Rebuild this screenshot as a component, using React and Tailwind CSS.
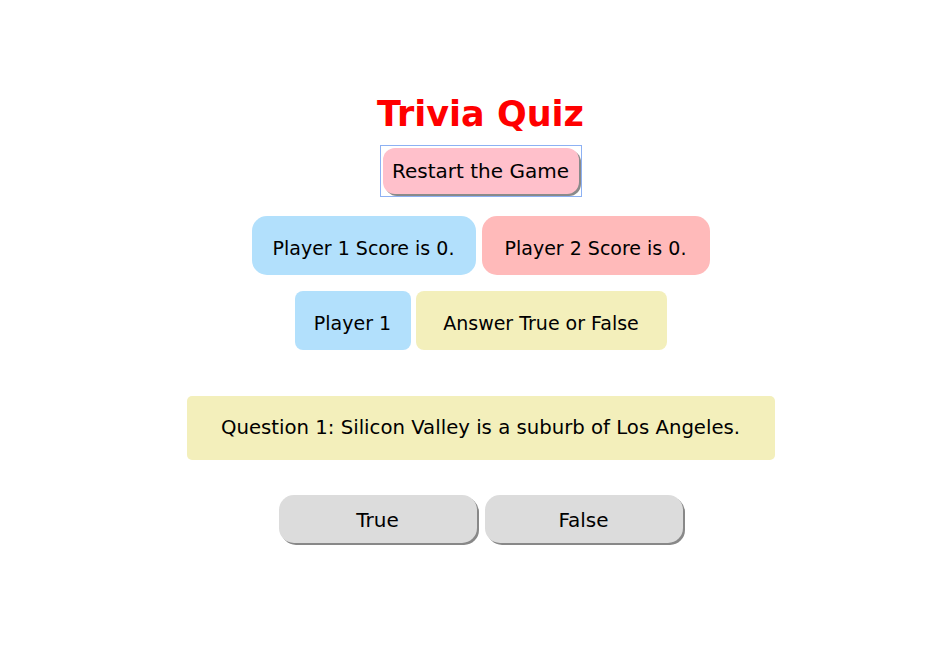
import React, { useState } from 'react';

const App = () => {
    const [scores] = useState({ p1: 0, p2: 0 });
    const [player] = useState(1);
    const [question] = useState({ n: 1, text: 'Silicon Valley is a suburb of Los Angeles.' });

    return (
        <div className="min-h-screen bg-white pl-[12px] pt-[93px] flex flex-col items-center text-black font-['DejaVu_Sans',sans-serif]">
            <h1 className="text-[35px] leading-[42px] font-bold text-[#ff0000]">Trivia Quiz</h1>

            <div className="mt-[10px] border border-[#8db1f3] p-[2px]">
                <button className="w-[196px] h-[46px] bg-[#ffc0cb] rounded-[12px] shadow-[2px_2px_0_#8a8a8a] text-[20px]">
                    Restart the Game
                </button>
            </div>

            <div className="mt-[19px] flex gap-[6px]">
                <div className="w-[224px] h-[59px] pt-[5px] bg-[#b2e0fc] rounded-[15px] flex items-center justify-center text-[19px]">
                    Player 1 Score is {scores.p1}.
                </div>
                <div className="w-[228px] h-[59px] pt-[5px] bg-[#ffbaba] rounded-[15px] flex items-center justify-center text-[19px]">
                    Player 2 Score is {scores.p2}.
                </div>
            </div>

            <div className="mt-[16px] flex gap-[5px]">
                <div className="w-[116px] h-[59px] pt-[5px] bg-[#b2e0fc] rounded-[8px] flex items-center justify-center text-[19px]">
                    Player {player}
                </div>
                <div className="w-[251px] h-[59px] pt-[5px] bg-[#f3efbb] rounded-[8px] flex items-center justify-center text-[19px]">
                    Answer True or False
                </div>
            </div>

            <div className="mt-[46px] w-[588px] h-[64px] bg-[#f3efbb] rounded-[5px] flex items-center justify-center text-[19.7px]">
                Question {question.n}: {question.text}
            </div>

            <div className="mt-[35px] flex gap-[8px]">
                <button className="w-[198px] h-[48px] pt-[1px] bg-[#dcdcdc] rounded-[15px] shadow-[2px_2px_0_#888888] text-[20px]">
                    True
                </button>
                <button className="w-[198px] h-[48px] pt-[1px] bg-[#dcdcdc] rounded-[15px] shadow-[2px_2px_0_#888888] text-[20px]">
                    False
                </button>
            </div>
        </div>
    );
};

export default App;
